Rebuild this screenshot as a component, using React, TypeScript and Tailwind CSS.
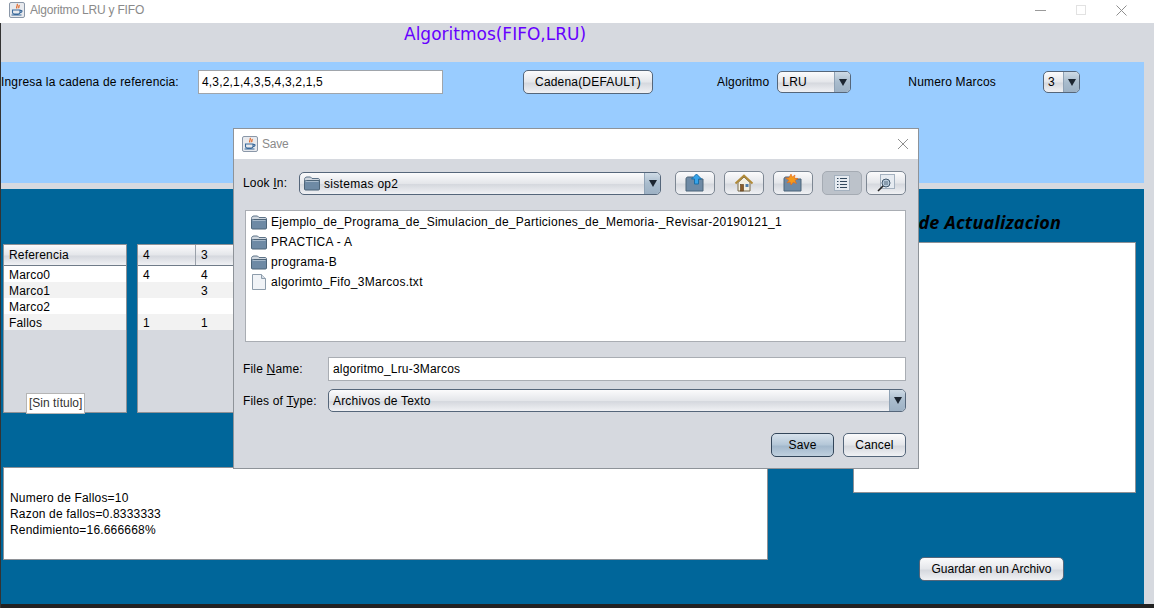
import React from 'react';

const glass = 'bg-[linear-gradient(#fbfbfc,#e4e6ea_50%,#d5d8de_55%,#f0f1f4)]';

const JavaIcon = () => (
  <svg width="16" height="16" viewBox="0 0 16 16">
    <rect x="0.5" y="0.5" width="15" height="15" rx="1.5" fill="#e8eaee" stroke="#8a97a8" />
    <path d="M8 2c1.500 1.500-1.500 2.500 0 4.500M10 3c.8 1-1 1.800 0 3.200" fill="none" stroke="#e2601c" strokeWidth="1.200" />
    <path d="M3.500 8h7.500v2.500c0 1-1 1.500-2 1.500H5.500c-1 0-2-.5-2-1.500zM11 8.500h1.500c.8 0 .8 2-1.500 2.200M2.500 13h10" fill="none" stroke="#38689a" strokeWidth="1.100" />
  </svg>
);

const FolderIcon = () => (
  <svg width="16" height="16" viewBox="0 0 16 16" className="shrink-0">
    <path d="M.5 14V4.500C.5 3 1.500 2 3 2h3.500l1.500 1.500h6c1 0 1.500.5 1.500 1.500v9z" fill="#cfd6de" stroke="#5c7287" />
    <path d="M.5 14V7.500C.5 6 1.500 5.500 2.500 5.500h13V14c0 .5-.5 1-1 1H1.500c-.5 0-1-.5-1-1z" fill="#6e8aa5" stroke="#4d6478" />
    <path d="M1.500 6.500h13" stroke="#a6b9cb" />
  </svg>
);

const FileIcon = () => (
  <svg width="16" height="16" viewBox="0 0 16 16" className="shrink-0">
    <path d="M1.500.5h9l4 4v11h-13z" fill="#f0f3f7" stroke="#8d9cab" />
    <path d="M10.500.5v4h4" fill="#d5dce4" stroke="#8d9cab" />
  </svg>
);

const Arrow = () => (
  <svg width="8" height="7" viewBox="0 0 8 7">
    <path d="M0 0h8L4 7z" fill="#1c2530" />
  </svg>
);

const UpIcon = () => (
  <svg width="20" height="20" viewBox="0 0 20 20">
    <path d="M1 18V6c0-1.500 1-2 2-2h5l1 2h9v12z" fill="#6e8aa5" stroke="#4d6478" />
    <path d="M11.500 1l5 5h-3v5h-4V6h-3z" fill="#35a3ea" stroke="#1b6fa8" />
  </svg>
);

const HomeIcon = () => (
  <svg width="20" height="20" viewBox="0 0 20 20">
    <path d="M4 9.500V18h12V9.500L10 4z" fill="#f4f0e2" stroke="#77684a" />
    <path d="M1.500 10.500L10 2.500l8.500 8" fill="none" stroke="#b08a38" strokeWidth="2" />
    <rect x="6.500" y="11.500" width="3" height="6.500" fill="#8a5c28" stroke="#5b3c1a" strokeWidth=".6" />
    <rect x="11.500" y="11" width="3" height="3" fill="#4f7fae" />
  </svg>
);

const NewFolderIcon = () => (
  <svg width="20" height="20" viewBox="0 0 20 20">
    <path d="M1 18V6c0-1.500 1-2 2-2h5l1 2h9v12z" fill="#6e8aa5" stroke="#4d6478" />
    <path d="M8 1l1.300 3L12 2l-.6 3.200L15 5.500l-3 2 1.500 3-3.200-1.300L8 12l-.8-3-3.200.8 2-2.500L2.500 5l3.500-.2z" fill="#f49a1c" stroke="#e8661a" strokeWidth=".6" />
  </svg>
);

const ListIcon = () => (
  <svg width="16" height="16" viewBox="0 0 16 16">
    <rect x=".5" y=".5" width="15" height="15" fill="#e6ebf1" stroke="#a4b1bf" />
    <path d="M3 3.500h1.500M6 3.500h7M3 6.500h1.500M6 6.500h7M3 9.500h1.500M6 9.500h7M3 12.500h1.500M6 12.500h7" stroke="#33495e" />
  </svg>
);

const DetailsIcon = () => (
  <svg width="18" height="18" viewBox="0 0 18 18">
    <rect x="3.500" y=".5" width="14" height="14" fill="#e6ebf1" stroke="#a4b1bf" />
    <circle cx="9" cy="9" r="4" fill="#b9cbdb" stroke="#40566b" />
    <path d="M6 12l-5 5" stroke="#222" strokeWidth="1.600" />
    <path d="M7 8h4M7 10h4" stroke="#40566b" strokeWidth=".8" />
  </svg>
);

const ToolButton = ({ children, selected }: { children: React.ReactNode; selected?: boolean }) => (
  <button
    className={`w-10 h-6 flex items-center justify-center rounded-[5px] border ${
      selected ? 'bg-[#bcc2ca] border-[#a5abb3]' : `${glass} border-[#7d8793]`
    }`}
  >
    {children}
  </button>
);

const Combo = ({ label, className }: { label: React.ReactNode; className: string }) => (
  <div className={`flex rounded-[5px] border border-[#55667a] overflow-hidden ${glass} ${className}`}>
    <div className="flex-1 min-w-0 flex items-center pl-1 gap-1">{label}</div>
    <div className="w-[16px] flex items-center justify-center bg-[linear-gradient(#cfdbe6,#a9bccd_50%,#9db1c4)] border-l border-[#8fa2b5]">
      <Arrow />
    </div>
  </div>
);

const JavaButton = ({ children, className }: { children: React.ReactNode; className: string }) => (
  <button className={`rounded-[5px] border border-[#55667a] text-black ${glass} ${className}`}>{children}</button>
);

const rowColor = (i: number) => (i % 2 === 0 ? 'bg-white' : 'bg-[#f2f2f2]');

const RefTable = () => (
  <div className="w-[124px] h-[169px] bg-[#d6d9df] border border-[#8e9196]">
    <div className={`h-[21px] flex items-center pl-[5px] border-b border-[#6f7b88] ${glass}`}>Referencia</div>
    {['Marco0', 'Marco1', 'Marco2', 'Fallos'].map((name, i) => (
      <div key={name} className={`h-4 pl-[5px] leading-[18px] ${rowColor(i)}`}>{name}</div>
    ))}
  </div>
);

const columns = [
  ['4', '4', '', '', '1'],
  ['3', '4', '3', '', '1'],
];

const FrameTable = () => (
  <div className="w-[630px] h-[169px] ml-[10px] bg-[#d6d9df] border border-[#8e9196]">
    <div className={`h-[21px] flex border-b border-[#6f7b88] ${glass}`}>
      {columns.map((col, c) => (
        <div key={c} className="w-[58px] pl-[5px] leading-[20px] border-r border-[#9aa1aa]">{col[0]}</div>
      ))}
    </div>
    {[1, 2, 3, 4].map((r, i) => (
      <div key={r} className={`h-4 flex leading-[18px] ${rowColor(i)}`}>
        {columns.map((col, c) => (
          <div key={c} className="w-[58px] pl-[5px]">{col[r]}</div>
        ))}
      </div>
    ))}
  </div>
);

const SaveDialog = () => (
  <div className="absolute left-[233px] top-[128px] w-[686px] h-[341px] bg-[#d6d9df] border border-[#8e9399]">
    <div className="h-[30px] bg-white flex items-center pl-2">
      <JavaIcon />
      <span className="ml-[4px] text-[#8a8a8a] tracking-[-0.2px]">Save</span>
      <svg className="ml-auto mr-[9px]" width="12" height="12" viewBox="0 0 12 12">
        <path d="M1 1l10 10M11 1L1 11" stroke="#8f8f8f" />
      </svg>
    </div>
    <div className="px-[9px] pt-[12px]">
      <div className="flex items-center h-6">
        <span className="w-[56px]">Look <u>I</u>n:</span>
        <Combo
          className="w-[362px] h-[23px]"
          label={<><FolderIcon /><span className="tracking-[0.3px] pt-px">sistemas op2</span></>}
        />
        <div className="flex ml-[14px] gap-[9px]">
          <ToolButton><UpIcon /></ToolButton>
          <ToolButton><HomeIcon /></ToolButton>
          <ToolButton><NewFolderIcon /></ToolButton>
          <ToolButton selected><ListIcon /></ToolButton>
        </div>
        <div className="ml-1">
          <ToolButton><DetailsIcon /></ToolButton>
        </div>
      </div>
      <div className="mt-[15px] ml-[2px] w-[661px] h-[132px] bg-white border border-[#a9adb3] pt-px pl-[5px] tracking-[0.27px]">
        {[
          { name: 'Ejemplo_de_Programa_de_Simulacion_de_Particiones_de_Memoria-_Revisar-20190121_1', folder: true },
          { name: 'PRACTICA - A', folder: true },
          { name: 'programa-B', folder: true },
          { name: 'algorimto_Fifo_3Marcos.txt', folder: false },
        ].map((item) => (
          <div key={item.name} className="h-5 flex items-center gap-1">
            {item.folder ? <FolderIcon /> : <FileIcon />}
            <span>{item.name}</span>
          </div>
        ))}
      </div>
      <div className="flex items-center mt-[15px]">
        <span className="w-[85px]">File <u>N</u>ame:</span>
        <div className="w-[578px] h-6 bg-white border border-[#a9adb3] pl-1 leading-[22px]">algoritmo_Lru-3Marcos</div>
      </div>
      <div className="flex items-center mt-2">
        <span className="w-[85px]">Files of <u>T</u>ype:</span>
        <Combo className="w-[578px] h-[23px]" label={<span>Archivos de Texto</span>} />
      </div>
      <div className="flex justify-end gap-[9px] mt-[21px] pr-[3px]">
        <button className="w-[63px] h-6 rounded-[5px] border border-[#33465a] bg-[linear-gradient(#d7e2ec,#b3c6d7_50%,#a2b8cc_55%,#c0d0de)]">Save</button>
        <JavaButton className="w-[63px] h-6">Cancel</JavaButton>
      </div>
    </div>
  </div>
);

export default function App() {
  return (
    <div className="relative w-[1154px] h-[608px] overflow-hidden bg-[#222222] text-[12px] tracking-[0.18px] text-black font-['Liberation_Sans',Arial,sans-serif]">
      <div className="h-[23px] bg-white flex items-center pl-[9px] pb-[3px]">
        <JavaIcon />
        <span className="ml-[5px] text-[#8a8a8a] tracking-[-0.2px]">Algoritmo LRU y FIFO</span>
        <div className="ml-auto flex items-center gap-[30px] mr-[27px]">
          <span className="w-[11px] h-px bg-[#9a9a9a]" />
          <span className="w-[10px] h-[10px] border border-[#e2e2e2]" />
          <svg width="11" height="11" viewBox="0 0 11 11">
            <path d="M.5.5l10 10M10.500.5l-10 10" stroke="#8f8f8f" />
          </svg>
        </div>
      </div>

      <div className="h-[581px] ml-px bg-[#d6d9df]">
        <div className="h-[39px] pl-[403px] pt-px text-[17px] leading-[20px] tracking-normal text-[#6600ff] font-['DejaVu_Sans',sans-serif]">
          Algoritmos(FIFO,LRU)
        </div>
        <div className="w-[1143px] h-[121px] bg-[#99ccff] pt-2">
          <div className="flex items-center h-6">
            <span className="w-[197px]">Ingresa la cadena de referencia:</span>
            <div className="w-[245px] h-6 bg-white border border-[#a0a5ab] pl-[3px] leading-[23px]">4,3,2,1,4,3,5,4,3,2,1,5</div>
            <JavaButton className="w-[130px] h-6 ml-[80px]">Cadena(DEFAULT)</JavaButton>
            <span className="ml-[64px]">Algoritmo</span>
            <Combo className="w-[74px] h-[22px] ml-[8px]" label={<span>LRU</span>} />
            <span className="ml-[57px]">Numero Marcos</span>
            <Combo className="w-[37px] h-[22px] ml-[47px]" label={<span>3</span>} />
          </div>
        </div>
        <div className="w-[1143px] h-[415px] mt-[6px] bg-[#00669a] flex">
          <div className="relative w-[766px] pl-[2px] pt-[55px] shrink-0">
            <div className="flex">
              <RefTable />
              <FrameTable />
            </div>
            <div className="absolute left-[25px] top-[204px] h-[21px] px-[2px] leading-[19px] tracking-normal bg-white border border-[#b5b5b5] text-[#333]">[Sin título]</div>
            <div className="mt-[54px] w-[765px] h-[93px] bg-white border border-[#8e9196] pl-[6px] pt-[22px] leading-4">
              <div>Numero de Fallos=10</div>
              <div>Razon de fallos=0.8333333</div>
              <div>Rendimiento=16.666668%</div>
            </div>
          </div>
          <div className="ml-[86px] w-[283px] pt-[23px] flex flex-col">
            <div className="h-[30px] pr-[75px] text-right text-[18px] leading-5 tracking-[0.2px] font-bold italic font-['Open_Sans',sans-serif]">de Actualizacion</div>
            <div className="h-[251px] bg-white border border-[#8e9196]" />
            <JavaButton className="w-[145px] h-6 mt-[64px] ml-[66px] tracking-normal">Guardar en un Archivo</JavaButton>
          </div>
        </div>
      </div>

      <div className="absolute left-0 top-[23px] bottom-0 w-px bg-[#333]" />
      <SaveDialog />
    </div>
  );
}
